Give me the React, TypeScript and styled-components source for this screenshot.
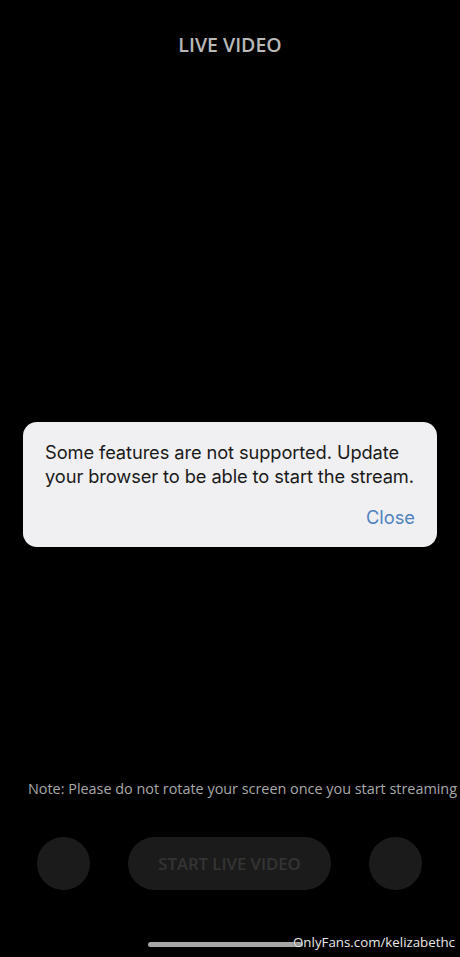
import React from "react";
import styled, { createGlobalStyle } from "styled-components";

const Global = createGlobalStyle`
  html, body { margin: 0; padding: 0; background: #000; }
  body { width: 460px; height: 957px; overflow: hidden; }
`;

const Screen = styled.div`
  position: relative;
  width: 460px;
  height: 957px;
  background: #000;
  display: flex;
  flex-direction: column;
  overflow: hidden;
  font-family: "Open Sans", "Liberation Sans", sans-serif;
`;

const Title = styled.h1`
  margin: 0;
  padding-top: 33px;
  height: 24px;
  line-height: 24px;
  text-align: center;
  font-size: 19.5px;
  font-weight: 600;
  color: #b9b9b9;
`;

const Spacer = styled.div`
  flex: 1;
`;

const Note = styled.p`
  margin: 0;
  padding-left: 28px;
  white-space: nowrap;
  font-size: 14.4px;
  line-height: 20px;
  color: #a9a9a9;
`;

const Controls = styled.div`
  display: flex;
  align-items: center;
  padding: 38px 37px 0 37px;
  gap: 38px;
`;

const Round = styled.div`
  width: 53px;
  height: 53px;
  border-radius: 50%;
  background: #1b1b1b;
  flex: none;
`;

const StartButton = styled.button`
  width: 203px;
  height: 53px;
  border: none;
  border-radius: 27px;
  background: #1b1b1b;
  color: #343434;
  font-family: "Open Sans", "Liberation Sans", sans-serif;
  font-size: 16.7px;
  font-weight: 600;
  padding: 0;
  flex: none;
`;

const Footer = styled.div`
  position: relative;
  height: 67px;
`;

const HomeBar = styled.div`
  position: absolute;
  left: 148px;
  top: 52px;
  width: 155px;
  height: 5px;
  border-radius: 3px;
  background: #a6a6a6;
`;

const Watermark = styled.span`
  position: absolute;
  right: 5px;
  top: 42px;
  font-family: "Open Sans", "Liberation Sans", sans-serif;
  font-size: 13.3px;
  line-height: 20px;
  color: #e8e8e8;
  text-shadow: 0 0 2px rgba(0, 0, 0, 0.6);
`;

const Alert = styled.div`
  position: absolute;
  left: 23px;
  top: 422px;
  width: 414px;
  height: 125px;
  box-sizing: border-box;
  border-radius: 14px;
  background: #f0f0f2;
  padding: 18px 22px 0 22px;
  display: flex;
  flex-direction: column;
  font-family: Inter, "Liberation Sans", sans-serif;
`;

const AlertText = styled.p`
  margin: 0;
  font-size: 18.3px;
  line-height: 24px;
  color: #1a1a1a;
  letter-spacing: -0.1px;
`;

const AlertAction = styled.button`
  align-self: flex-end;
  margin-top: 17px;
  margin-right: 0;
  border: none;
  background: none;
  padding: 0;
  font-family: Inter, "Liberation Sans", sans-serif;
  font-size: 18.3px;
  line-height: 24px;
  color: #4e82c0;
`;

export default function App() {
  return (
    <>
      <Global />
      <Screen>
        <Title>LIVE VIDEO</Title>
        <Spacer />
        <Note>Note: Please do not rotate your screen once you start streaming</Note>
        <Controls>
          <Round />
          <StartButton>START LIVE VIDEO</StartButton>
          <Round />
        </Controls>
        <Footer>
          <HomeBar />
          <Watermark>OnlyFans.com/kelizabethc</Watermark>
        </Footer>
        <Alert>
          <AlertText>
            Some features are not supported. Update your browser to be able to start the stream.
          </AlertText>
          <AlertAction>Close</AlertAction>
        </Alert>
      </Screen>
    </>
  );
}
